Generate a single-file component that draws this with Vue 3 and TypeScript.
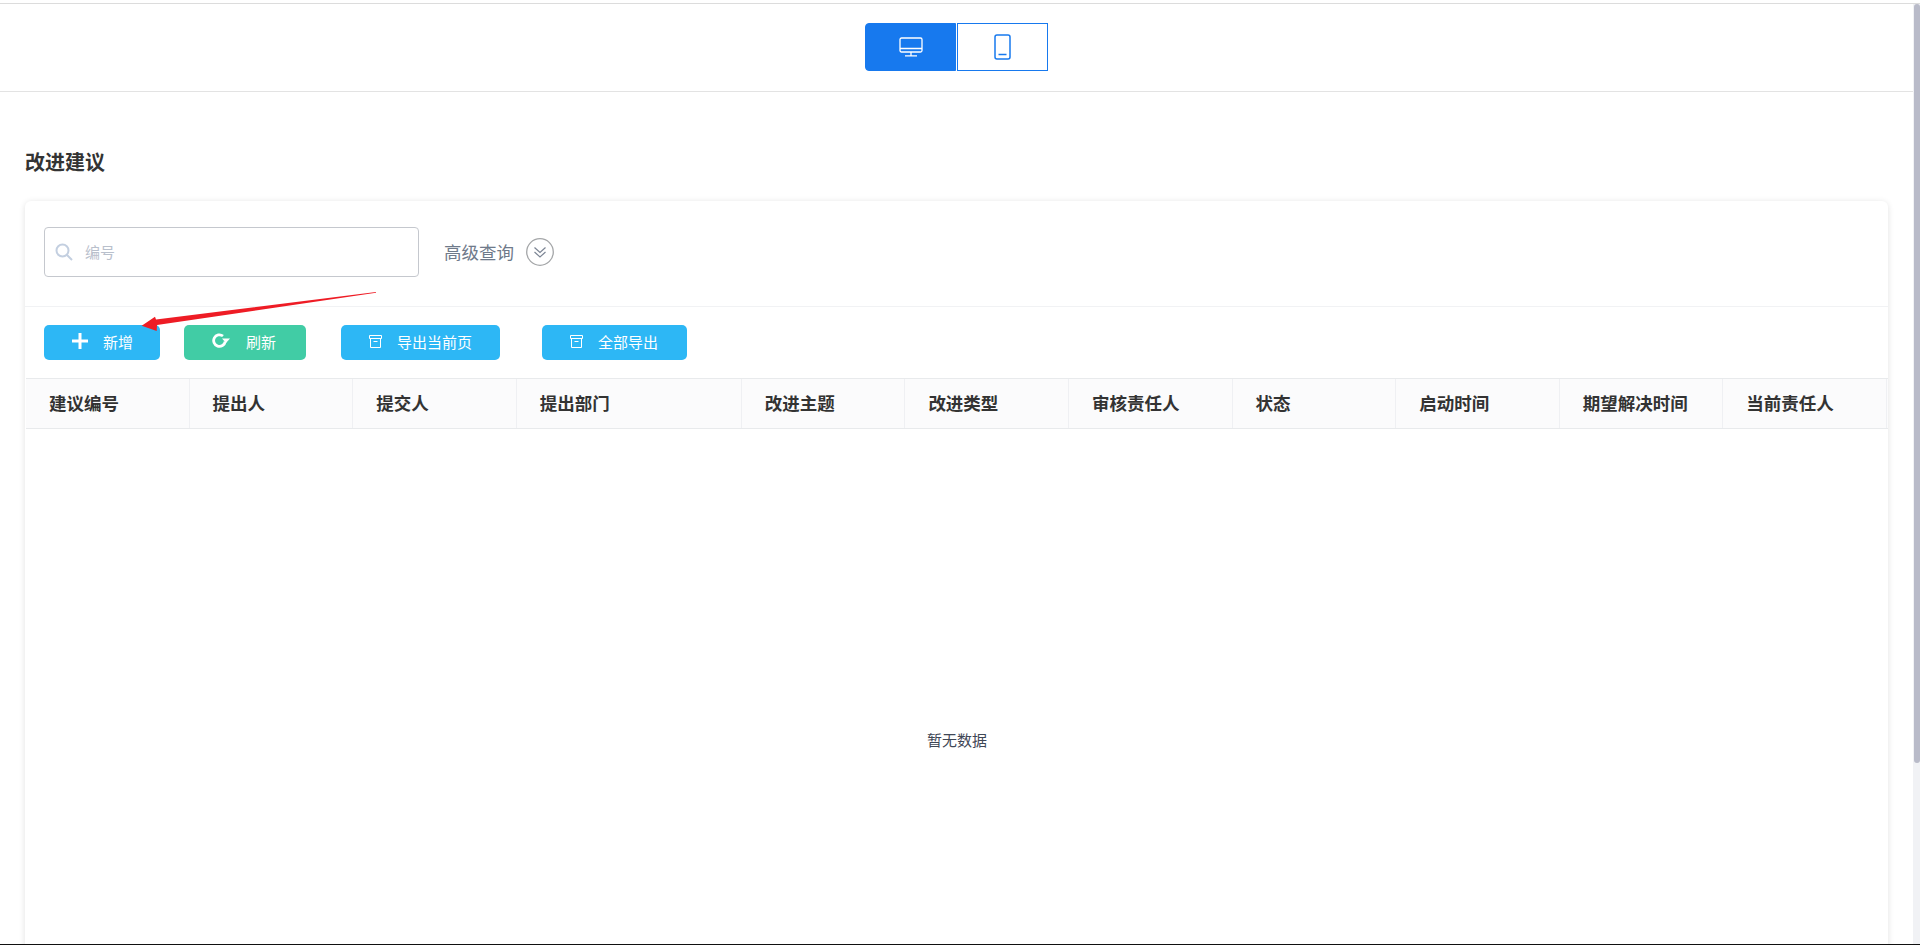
<script setup lang="ts">
interface Column { label: string; wide?: boolean }
const columns: Column[] = [
  { label: '建议编号' },
  { label: '提出人' },
  { label: '提交人' },
  { label: '提出部门', wide: true },
  { label: '改进主题' },
  { label: '改进类型' },
  { label: '审核责任人' },
  { label: '状态' },
  { label: '启动时间' },
  { label: '期望解决时间' },
  { label: '当前责任人' },
]
</script>

<template>
  <div class="screen">
    <div class="shell">
      <div class="main">
        <header class="topbar">
          <button class="device active" type="button">
            <svg width="24" height="20" viewBox="0 0 24 20" fill="none" stroke="currentColor" stroke-width="1.3">
              <rect x="1" y="1" width="22" height="14" rx="1.5" />
              <path d="M1 11.500h22M12 15v3.500M6 18.800h12" />
            </svg>
          </button>
          <button class="device" type="button">
            <svg width="17" height="26" viewBox="0 0 17 26" fill="none" stroke="currentColor" stroke-width="1.5">
              <rect x="1" y="1" width="15" height="24" rx="2" />
              <path d="M4.500 20.500h8" />
            </svg>
          </button>
        </header>

        <section class="content">
          <h1 class="title">改进建议</h1>
          <div class="card">
            <div class="search-row">
              <div class="search-box">
                <svg class="search-icon" width="18" height="18" viewBox="0 0 18 18" fill="none" stroke="#c3cfe0" stroke-width="2">
                  <circle cx="7.500" cy="7.500" r="6" />
                  <path d="M12 12l5 5" />
                </svg>
                <span class="placeholder">编号</span>
              </div>
              <span class="advanced">高级查询</span>
              <svg class="chevrons" width="28" height="28" viewBox="0 0 28 28" fill="none">
                <circle cx="14" cy="14" r="13.300" stroke="#a4a6a8" stroke-width="1.300" />
                <path d="M8.500 9.500l5.500 5 5.500-5M8.500 14l5.500 5 5.500-5" stroke="#7c8594" stroke-width="1.200" />
              </svg>
            </div>

            <div class="actions">
              <button class="btn sky add" type="button">
                <svg width="16" height="16" viewBox="0 0 16 16" fill="#fff"><path d="M6.500 0h3v6.500H16v3H9.500V16h-3V9.500H0v-3h6.500z" /></svg>
                新增
              </button>
              <button class="btn green refresh" type="button">
                <svg width="18" height="16" viewBox="0 0 18 16" fill="none">
                  <path d="M13.200 8.500a5.800 5.800 0 1 1-2.200-5.500" stroke="#fff" stroke-width="2.800" />
                  <path d="M10 5.500h8l-4 4.500z" fill="#fff" />
                </svg>
                刷新
              </button>
              <button class="btn sky export-page" type="button">
                <svg width="13" height="13" viewBox="0 0 13 13" fill="none" stroke="#fff" stroke-width="1">
                  <path d="M.5 .5h12v3H.5zM1.500 3.500v9h10v-9M4.500 6.500h4" />
                </svg>
                导出当前页
              </button>
              <button class="btn sky export-all" type="button">
                <svg width="13" height="13" viewBox="0 0 13 13" fill="none" stroke="#fff" stroke-width="1">
                  <path d="M.5 .5h12v3H.5zM1.500 3.500v9h10v-9M4.500 6.500h4" />
                </svg>
                全部导出
              </button>
            </div>

            <div class="table">
              <div class="thead">
                <div v-for="col in columns" :key="col.label" class="th" :class="{ wide: col.wide }">{{ col.label }}</div>
              </div>
              <div class="empty">暂无数据</div>
            </div>
          </div>
        </section>
      </div>

      <div class="scroll-track"><div class="scroll-thumb"></div></div>
    </div>

    <svg class="arrow" width="245" height="45" viewBox="0 0 245 45">
      <path d="M240 0L20 27.500 19 24.700 5.700 33.700 20.700 39 21 33 240 .8z" fill="#ee1c25" />
    </svg>
  </div>
</template>

<style>
html, body { margin: 0; background: #fff; overflow: hidden; }
</style>

<style scoped>
* { box-sizing: border-box; }
.screen {
  position: relative;
  height: 945px;
  padding-top: 3px;
  border-bottom: 1px solid #111;
  overflow: hidden;
  background: #fff;
  font-family: "Noto Sans CJK SC", "Liberation Sans", sans-serif;
}
.shell {
  display: flex;
  height: 100%;
  border-top: 1px solid #dcdcdc;
}
.main { flex: 1; min-width: 0; height: 100%; overflow: hidden; }
.scroll-track {
  width: 7px;
  height: 100%;
  background: #f1f2f5;
}
.scroll-thumb {
  width: 6px;
  height: 759px;
  margin-left: 1px;
  border-radius: 3px;
  background: #b9bbc9;
}
.topbar {
  display: flex;
  justify-content: center;
  align-items: center;
  gap: 1px;
  height: 88px;
  padding-bottom: 1px;
  border-bottom: 1px solid #e3e3e3;
}
.device {
  display: flex;
  align-items: center;
  justify-content: center;
  width: 91px;
  height: 48px;
  padding: 0;
  border: 1px solid #1779ee;
  background: #fff;
  color: #1779ee;
}
.device.active {
  background: #1779ee;
  color: #fff;
  border-radius: 4px 0 0 4px;
}
.content { padding: 0 25px; }
.title {
  margin: 0;
  padding-top: 55px;
  height: 109px;
  font-size: 20px;
  line-height: 29px;
  font-weight: 700;
  color: #333;
}
.card {
  height: 900px;
  border-radius: 6px;
  background: #fff;
  box-shadow: 0 1px 6px rgba(0, 0, 0, .12);
}
.search-row {
  display: flex;
  align-items: center;
  height: 106px;
  padding: 0 19px 4px;
  border-bottom: 1px solid #f1f2f4;
}
.search-box {
  display: flex;
  align-items: center;
  width: 375px;
  height: 50px;
  padding-left: 10px;
  border: 1px solid #c5c8ce;
  border-radius: 4px;
}
.search-icon { flex: none; }
.placeholder {
  margin-left: 12px;
  font-size: 15px;
  color: #b9c0cc;
}
.advanced {
  margin-left: 25px;
  font-size: 17.500px;
  color: #6f7a8a;
}
.chevrons { margin-left: 12px; }
.actions {
  display: flex;
  align-items: flex-start;
  height: 71px;
  padding: 18px 19px 0;
}
.btn {
  display: flex;
  align-items: center;
  height: 35px;
  padding: 0 28px 2px;
  border: 0;
  border-radius: 5px;
  color: #fff;
  font: inherit;
  font-size: 15px;
}
.btn svg { flex: none; margin-top: -1px; }
.sky { background: #2db7f5; }
.green { background: #41cca5; }
.add { gap: 15px; padding-right: 27px; }
.refresh { gap: 16px; margin-left: 24px; padding: 0 30px 2px 28px; }
.export-page { gap: 15px; margin-left: 35px; }
.export-all { gap: 15px; margin-left: 42px; padding-right: 29px; }
.table { margin-left: 1px; border-top: 1px solid #e8eaec; }
.thead {
  display: flex;
  height: 50px;
  background: #fbfbfc;
  border-bottom: 1px solid #e8eaec;
}
.th {
  flex: 0 0 163.600px;
  display: flex;
  align-items: center;
  padding: 0 0 2px 23px;
  border-right: 1px solid #eff0f3;
  font-size: 17.500px;
  font-weight: 700;
  color: #333;
}
.th.wide { flex-basis: 225px; }
.empty {
  display: flex;
  align-items: center;
  justify-content: center;
  height: 624px;
  padding-bottom: 3px;
  font-size: 15px;
  color: #3f4756;
}
.arrow {
  position: absolute;
  left: 136px;
  top: 292px;
}
</style>
